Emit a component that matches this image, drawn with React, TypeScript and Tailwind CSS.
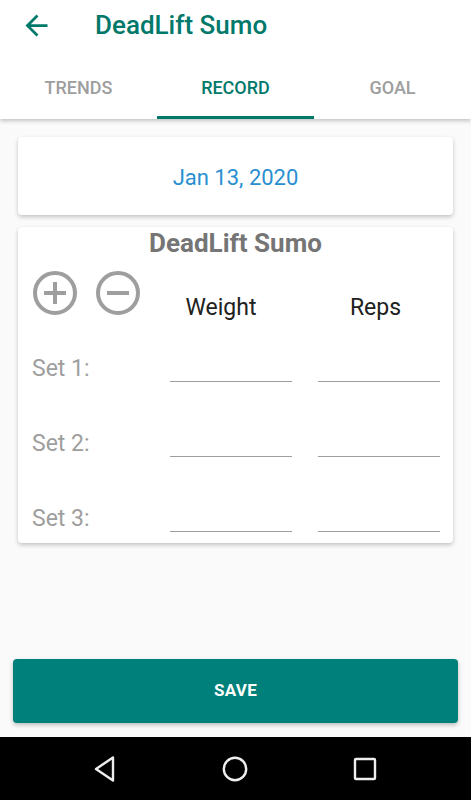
import React from "react";

const font = { fontFamily: "Roboto, 'Noto Sans', sans-serif" };

function CircleIcon({ plus }: { plus?: boolean }) {
  return (
    <svg width="46" height="46" viewBox="0 0 46 46" fill="none">
      <circle cx="23" cy="23" r="20" stroke="#9e9e9e" strokeWidth="4" />
      <line x1="12" y1="23" x2="34" y2="23" stroke="#9e9e9e" strokeWidth="4" />
      {plus && <line x1="23" y1="12" x2="23" y2="34" stroke="#9e9e9e" strokeWidth="4" />}
    </svg>
  );
}

function SetRow({ n }: { n: number }) {
  return (
    <div className="flex h-[75px] items-center pl-[14px]">
      <div className="mt-[5px] w-[138px] text-[23px] text-[#9e9e9e]">Set {n}:</div>
      <div className="mt-[1px] h-[29px] w-[122px] border-b border-[#9e9e9e]" />
      <div className="ml-[26px] mt-[1px] h-[29px] w-[122px] border-b border-[#9e9e9e]" />
    </div>
  );
}

export default function App() {
  return (
    <div className="flex h-[800px] w-[471px] flex-col bg-[#fafafa]" style={font}>
      <div className="relative z-10 bg-white shadow-[0_2px_4px_rgba(0,0,0,0.22)]">
        <div className="flex h-[56px] items-center pb-[5px]">
          <svg className="ml-[20px]" width="33" height="33" viewBox="0 0 24 24" fill="#00796b">
            <path d="M20 11H7.83l5.59-5.59L12 4l-8 8 8 8 1.41-1.41L7.83 13H20v-2z" />
          </svg>
          <div className="ml-[42px] text-[26px] font-medium text-[#00796b]">DeadLift Sumo</div>
        </div>
        <div className="flex h-[63px]">
          <div className="flex w-[157px] flex-col">
            <div className="flex flex-1 items-center justify-center pt-[3px] text-[18px] font-medium text-[#9e9e9e]">TRENDS</div>
            <div className="h-[3px]" />
          </div>
          <div className="flex w-[157px] flex-col">
            <div className="flex flex-1 items-center justify-center pt-[3px] text-[18px] font-medium text-[#00796b]">RECORD</div>
            <div className="h-[3px] bg-[#00796b]" />
          </div>
          <div className="flex w-[157px] flex-col">
            <div className="flex flex-1 items-center justify-center pt-[3px] text-[18px] font-medium text-[#9e9e9e]">GOAL</div>
            <div className="h-[3px]" />
          </div>
        </div>
      </div>

      <div className="mx-[18px] mt-[18px] flex h-[78px] items-center justify-center rounded-[4px] bg-white pt-[2px] shadow-[0_2px_4px_rgba(0,0,0,0.22)]">
        <span className="text-[22px] text-[#2a8fd1]">Jan 13, 2020</span>
      </div>

      <div className="mx-[18px] mt-[12px] h-[316px] overflow-hidden rounded-[4px] bg-white shadow-[0_2px_4px_rgba(0,0,0,0.22)]">
        <div className="flex h-[30px] items-center justify-center pt-[2px] text-[26px] font-bold text-[#757575]">DeadLift Sumo</div>
        <div className="flex h-[72px] items-center pl-[14px]">
          <div className="flex w-[138px] items-center gap-[17px]">
            <CircleIcon plus />
            <CircleIcon />
          </div>
          <div className="mt-[30px] w-[122px] pr-[20px] text-center text-[23px] text-[#212121]">Weight</div>
          <div className="ml-[26px] mt-[30px] w-[122px] pr-[7px] text-center text-[23px] text-[#212121]">Reps</div>
        </div>
        <SetRow n={1} />
        <SetRow n={2} />
        <SetRow n={3} />
      </div>

      <div className="flex-1" />

      <div className="mx-[13px] mb-[14px] flex h-[64px] items-center justify-center rounded-[4px] bg-[#00807a] shadow-[0_2px_4px_rgba(0,0,0,0.25)]">
        <span className="text-[17px] font-bold tracking-[0.3px] text-white">SAVE</span>
      </div>

      <div className="flex h-[63px] items-center bg-black pl-[40px]">
        <div className="flex w-[130px] justify-center">
          <svg width="26" height="28" viewBox="0 0 26 28" fill="none">
            <path d="M21 2.5 L4 14 L21 25.5 Z" stroke="#eeeeee" strokeWidth="2.4" strokeLinejoin="round" />
          </svg>
        </div>
        <div className="flex w-[130px] justify-center">
          <svg width="28" height="28" viewBox="0 0 28 28" fill="none">
            <circle cx="14" cy="14" r="11.2" stroke="#eeeeee" strokeWidth="2.4" />
          </svg>
        </div>
        <div className="flex w-[130px] justify-center">
          <svg width="26" height="26" viewBox="0 0 26 26" fill="none">
            <rect x="3" y="3" width="20" height="20" rx="1" stroke="#eeeeee" strokeWidth="2.4" />
          </svg>
        </div>
      </div>
    </div>
  );
}
